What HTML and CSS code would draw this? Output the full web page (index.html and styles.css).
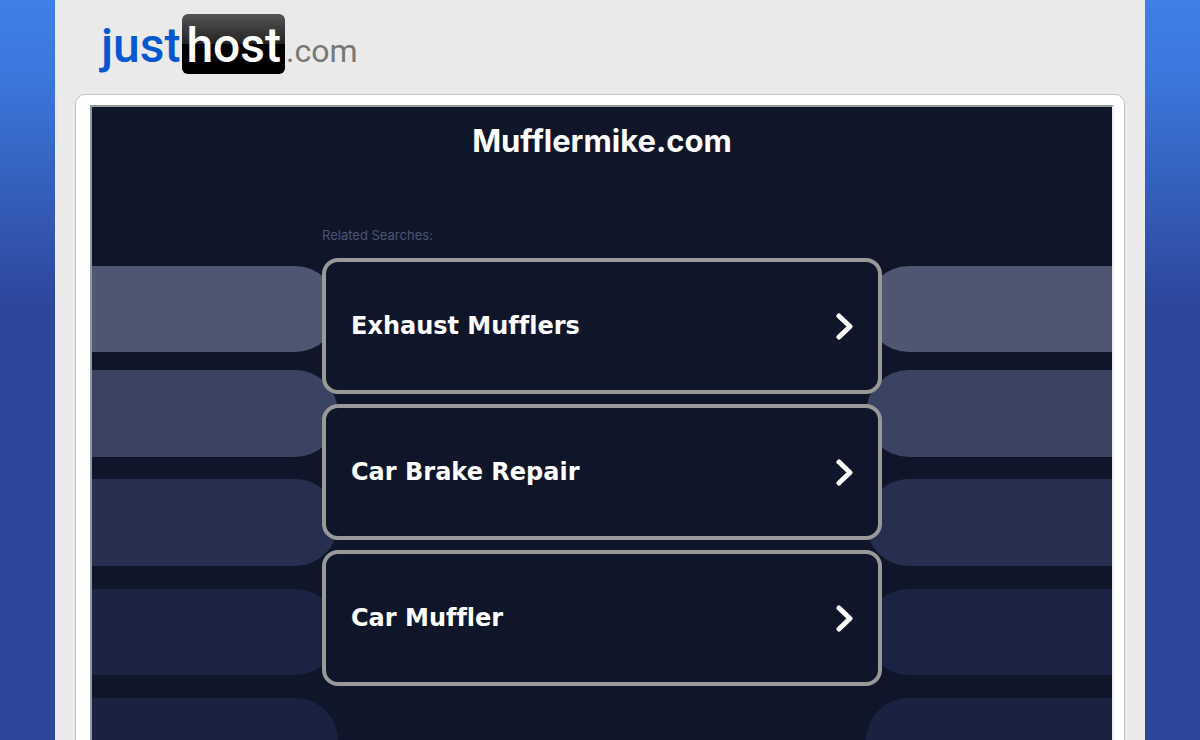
FILE: index.html
```html
<!DOCTYPE html>
<html lang="en">
<head>
<meta charset="utf-8">
<title>Mufflermike.com</title>
<link rel="stylesheet" href="styles.css">
</head>
<body>
<div class="page">
  <header class="header">
    <a class="logo" href="#"><span class="logo-just">just</span><span class="logo-host">host</span><span class="logo-com">.com</span></a>
  </header>
  <div class="panel">
    <main class="frame">
      <svg class="stripes stripes-left" width="246" height="520" viewBox="0 0 246 520" aria-hidden="true">
        <rect x="-60" y="0" width="306" height="86" rx="43" fill="#4e5672"/>
        <rect x="-60" y="104" width="306" height="87" rx="43" fill="#3b4362"/>
        <rect x="-60" y="213" width="306" height="87" rx="43" fill="#272f50"/>
        <rect x="-60" y="323" width="306" height="86" rx="43" fill="#1b2345"/>
        <rect x="-60" y="432" width="306" height="86" rx="43" fill="#1a2242"/>
      </svg>
      <svg class="stripes stripes-right" width="246" height="520" viewBox="0 0 246 520" aria-hidden="true">
        <rect x="0" y="0" width="306" height="86" rx="43" fill="#4e5672"/>
        <rect x="0" y="104" width="306" height="87" rx="43" fill="#3b4362"/>
        <rect x="0" y="213" width="306" height="87" rx="43" fill="#272f50"/>
        <rect x="0" y="323" width="306" height="86" rx="43" fill="#1b2345"/>
        <rect x="0" y="432" width="306" height="86" rx="43" fill="#1a2242"/>
      </svg>
      <h1 class="title">Mufflermike.com</h1>
      <section class="searches">
        <h2 class="label">Related Searches:</h2>
        <nav class="list">
          <a class="item" href="#"><span>Exhaust Mufflers</span><svg class="chevron" width="18" height="28" viewBox="0 0 18 28" aria-hidden="true"><path d="M4 4L15 14.500L4 25"/></svg></a>
          <a class="item" href="#"><span>Car Brake Repair</span><svg class="chevron" width="18" height="28" viewBox="0 0 18 28" aria-hidden="true"><path d="M4 4L15 14.500L4 25"/></svg></a>
          <a class="item" href="#"><span>Car Muffler</span><svg class="chevron" width="18" height="28" viewBox="0 0 18 28" aria-hidden="true"><path d="M4 4L15 14.500L4 25"/></svg></a>
        </nav>
      </section>
    </main>
  </div>
</div>
</body>
</html>
```
FILE: styles.css
```css
* { box-sizing: border-box; }
body {
  margin: 0;
  background: #2d459a linear-gradient(#3f80e6 0, #3b76db 80px, #2d459a 310px) no-repeat;
}
.page {
  max-width: 1090px;
  height: 100vh;
  margin: 0 auto;
  padding: 14px 20px 0;
  overflow: hidden;
  background: #eaeaea;
}
.header { height: 80px; padding-left: 26px; }
.logo {
  display: inline-flex;
  align-items: baseline;
  font-family: Roboto, sans-serif;
  font-size: 48px;
  line-height: 56px;
  text-decoration: none;
}
.logo-just { color: #0758d0; font-weight: 500; }
.logo-host {
  margin: 0 1px 0 2px;
  padding: 4px 4px 0;
  border-radius: 6px;
  background: linear-gradient(#555 0, #222 50%, #000 50%);
  color: #fff;
  font-weight: 500;
}
.logo-com { color: #777; font-size: 32px; }
.panel {
  padding: 10px 10px 10px 14px;
  border: 1px solid #c4c4c4;
  border-radius: 10px;
  background: #fff;
}
.frame {
  position: relative;
  min-height: 720px;
  border: 2px solid #eee;
  border-top-color: #96999c;
  border-left-color: #96999c;
  overflow: hidden;
  background: #10162a;
}
.stripes { position: absolute; top: 159px; }
.stripes-left { left: 0; }
.stripes-right { right: 0; }
.title {
  margin: 14px 0 0;
  color: #fff;
  font: 700 31px/40px Inter, sans-serif;
  font-variant-ligatures: none;
  text-align: center;
}
.searches {
  position: relative;
  max-width: 560px;
  margin: 64px auto 0;
}
.label {
  margin: 0 0 13px;
  color: #4c5474;
  font: 400 13px/20px Inter, sans-serif;
}
.list { display: flex; flex-direction: column; gap: 10px; }
.item {
  display: flex;
  align-items: center;
  justify-content: space-between;
  padding: 48px 25px;
  border: 4px solid #999;
  border-radius: 16px;
  background: #10162a;
  color: #fff;
  font: 700 24px/32px "DejaVu Sans", Verdana, sans-serif;
  font-variant-ligatures: none;
  text-decoration: none;
}
.chevron {
  flex: none;
  fill: none;
  stroke: #fff;
  stroke-width: 5;
  stroke-linecap: round;
  stroke-linejoin: round;
}
```
